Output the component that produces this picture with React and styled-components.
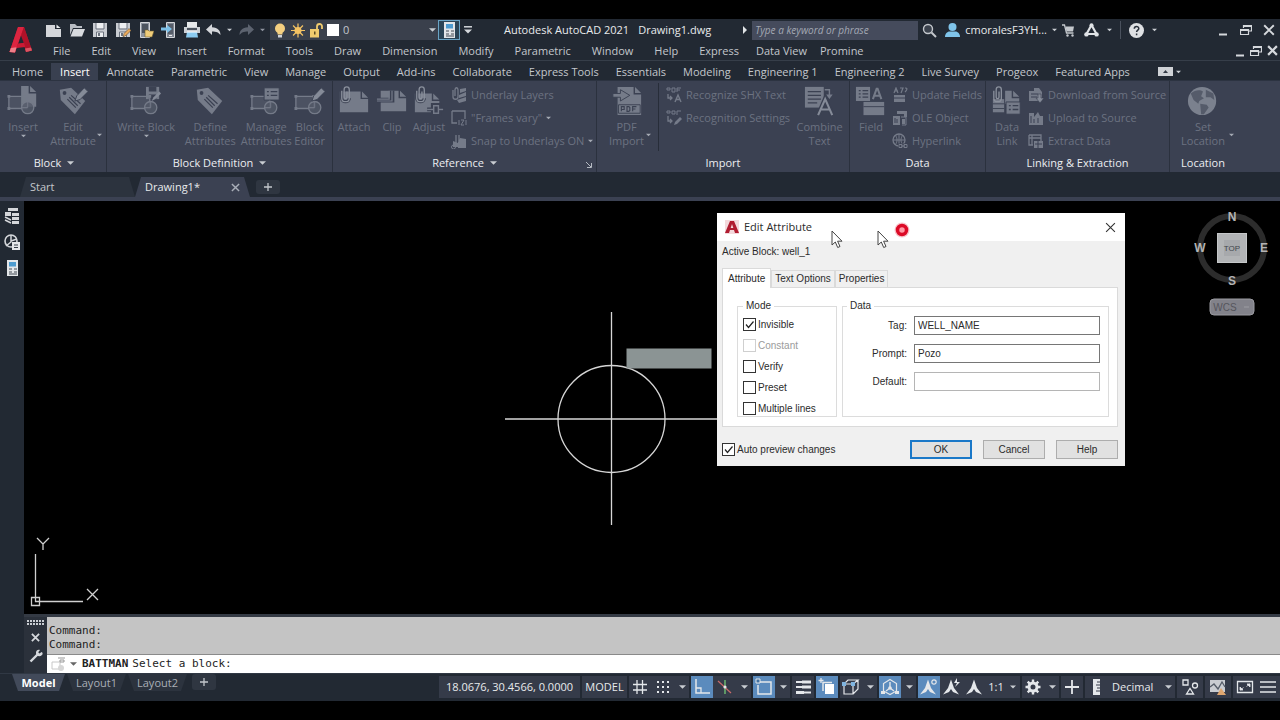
import React from 'react';
import styled, { createGlobalStyle, css } from 'styled-components';

const c = {
  chrome: '#222933',
  panel: '#3b4152',
  tab: '#2c333e',
  field: '#3a404c',
  text: '#c3c7cc',
  bright: '#e8eaec',
  dim: '#6c7281',
  dimIcon: '#757b89',
  blue: '#5b8bbd',
};

const Global = createGlobalStyle`
  *, *::before, *::after { box-sizing: border-box; }
  body { margin: 0; background: #000; font: 11px/14px "Open Sans", "Noto Sans", sans-serif; color: ${c.text}; }
  button, input, select { font: inherit; color: inherit; margin: 0; padding: 0; border: 0; background: none; border-radius: 0; }
  svg { display: block; flex: none; }
`;

/* ---------- page frame ---------- */

const Page = styled.div`
  height: 100vh;
  min-height: 600px;
  padding: 19px 0;
  background: #000;
  display: flex;
  flex-direction: column;
  overflow: hidden;
`;

const Header = styled.header`
  display: flex;
  background: ${c.chrome};
  border-bottom: 1px solid #363e49;
`;

const LogoButton = styled.button`
  width: 42px;
  display: grid;
  place-items: center;
`;

const HeaderRows = styled.div`
  flex: 1;
  min-width: 0;
`;

const TitleRow = styled.div`
  height: 22px;
  display: flex;
  align-items: center;
  white-space: nowrap;
`;

const MenuRow = styled.nav`
  height: 19px;
  padding-left: 0;
  display: flex;
  align-items: center;
  white-space: nowrap;
`;

const IconButton = styled.button`
  width: ${(p) => p.$w || 23}px;
  height: ${(p) => p.$h || 20}px;
  display: grid;
  place-items: center;
`;

const LayerBox = styled.div`
  width: 168px;
  height: 20px;
  margin-left: 1px;
  background: ${c.field};
  display: flex;
  align-items: center;
  gap: 4px;
  padding: 0 2px 0 3px;
`;

const Select = styled.select`
  appearance: none;
  flex: 1;
  min-width: 0;
  height: 18px;
  color: ${c.text};
`;

const Swatch = styled.span`
  width: 12px;
  height: 12px;
  background: #fff;
`;

const CalcButton = styled.button`
  width: 22px;
  height: 20px;
  border: 1px solid #6aa3c4;
  background: #2b4456;
  display: grid;
  place-items: center;
`;

const Title = styled.div`
  flex: 1;
  padding-left: 29px;
  color: ${c.bright};
  display: flex;
  gap: 9px;
`;

const SearchBox = styled.input`
  width: 166px;
  height: 19px;
  margin-left: 5px;
  padding: 0 3px;
  background: #454b5c;
  font-size: 10px;
  font-style: italic;
  &::placeholder { color: #a3a8b3; opacity: 1; }
`;

const UserButton = styled.button`
  margin-left: 4px;
  display: flex;
  align-items: center;
  gap: 5px;
  color: ${c.bright};
`;

const Separator = styled.span`
  width: 1px;
  height: 18px;
  background: #4a515d;
  margin: 0 4px;
`;

const WindowButtons = styled.div`
  display: flex;
  margin-left: ${(p) => p.$left || 'auto'};
`;

const MenuLink = styled.a`
  padding: 0 ${(p) => (p.$tight ? 6 : 10)}px 0 ${(p) => (p.$tight ? 7 : 11)}px;
  color: ${c.text};
  text-decoration: none;
`;

/* ---------- ribbon ---------- */

const RibbonTabs = styled.nav`
  height: 19px;
  padding: 2px 3px 0;
  background: ${c.chrome};
  display: flex;
  white-space: nowrap;
`;

const RibbonTab = styled.button`
  height: 17px;
  padding: 0 8px 0 9px;
  color: ${(p) => (p.$active ? '#fff' : c.text)};
  background: ${(p) => (p.$active ? '#394050' : 'none')};
`;

const RibbonToggle = styled.button`
  display: flex;
  align-items: center;
  gap: 3px;
  margin-left: 20px;
`;

const Ribbon = styled.section`
  height: 92px;
  padding-left: 2px;
  border-top: 1px solid #2c3341;
  background: ${c.panel};
  display: grid;
  grid-template-columns: 105px 226px 264px 253px 136px 184px minmax(66px, 1fr);
  white-space: nowrap;
`;

const Panel = styled.section`
  display: flex;
  flex-direction: column;
  border-right: ${(p) => (p.$last ? 0 : 1)}px solid #2b313e;
`;

const PanelTools = styled.div`
  flex: 1;
  display: flex;
  align-items: flex-start;
  padding-top: 2px;
  padding-left: ${(p) => p.$pad || 0}px;
`;

const PanelTitle = styled.button`
  height: 18px;
  color: #eceef1;
  display: flex;
  align-items: center;
  justify-content: center;
  gap: 6px;
  max-width: ${(p) => (p.$short ? '66px' : 'none')};
  position: relative;
`;

const Launcher = styled.span`
  position: absolute;
  right: 4px;
  bottom: 4px;
`;

const BigButton = styled.button`
  width: ${(p) => p.$w}px;
  padding-top: 2px;
  color: ${c.dim};
  display: flex;
  flex-direction: column;
  align-items: center;
  text-align: center;
  position: relative;
  & > svg:first-child { margin-bottom: 3px; }
`;

const SideCaret = styled.span`
  position: absolute;
  right: 0;
  bottom: 11px;
`;

const SmallStack = styled.div`
  display: flex;
  flex-direction: column;
  padding-left: ${(p) => p.$pad || 0}px;
`;

const SmallButton = styled.button`
  height: 23px;
  color: ${c.dim};
  display: flex;
  align-items: center;
  gap: 4px;
`;

const PanelRule = styled.span`
  width: 1px;
  height: 68px;
  background: #272d39;
`;

/* ---------- file tabs ---------- */

const FileTabs = styled.nav`
  height: 29px;
  padding: 5px 0 0 20px;
  background: ${c.chrome};
  border-bottom: 4px solid ${c.panel};
  display: flex;
`;

const FileTab = styled.div`
  width: 115px;
  height: 20px;
  padding: 0 10px;
  background: ${(p) => (p.$active ? c.panel : c.tab)};
  clip-path: polygon(0 100%, 6px 0, calc(100% - 6px) 0, 100% 100%);
  display: flex;
  align-items: center;
  justify-content: space-between;
  color: ${(p) => (p.$active ? c.bright : c.text)};
`;

const AddTab = styled.button`
  width: 24px;
  height: ${(p) => p.$h || 14}px;
  margin: ${(p) => p.$m || '3px 0 0 6px'};
  border-radius: 3px;
  background: #2f3641;
  display: grid;
  place-items: center;
`;

/* ---------- workspace ---------- */

const Workspace = styled.main`
  flex: 1;
  min-height: 0;
  display: flex;
`;

const Sidebar = styled.aside`
  width: 24px;
  padding-top: 2px;
  background: ${c.chrome};
  display: flex;
  flex-direction: column;
  align-items: center;
`;

const SideButton = styled.button`
  width: 24px;
  height: 26px;
  display: grid;
  place-items: center;
`;

const Stage = styled.div`
  flex: 1;
  min-width: 0;
  display: flex;
  flex-direction: column;
`;

const Canvas = styled.div`
  flex: 1;
  min-height: 0;
  position: relative;
  background: #000;
`;

const Drawing = styled.svg`
  position: absolute;
  inset: 0;
  width: 100%;
  height: 100%;
`;

const UcsIcon = styled.svg`
  position: absolute;
  left: 4px;
  bottom: 4px;
`;

const ViewCube = styled.svg`
  position: absolute;
  right: 10px;
  top: 8px;
`;

const Pointer = styled.svg`
  position: absolute;
  top: ${(p) => p.$y}px;
  right: ${(p) => p.$right}px;
`;

const CommandArea = styled.section`
  display: flex;
  border-top: 3px solid #343a44;
  background: #2b313b;
`;

const CommandTools = styled.div`
  width: 23px;
  padding-top: 3px;
  display: flex;
  flex-direction: column;
  align-items: center;
  gap: 7px;
`;

const CommandBody = styled.div`
  flex: 1;
  color: #222;
  font: 11px/14px "DejaVu Sans Mono", monospace;
`;

const CommandHistory = styled.div`
  height: 37px;
  padding: 7px 2px 0;
  background: #c4c4c4;
`;

const CommandLine = styled.label`
  height: 19px;
  padding-left: 4px;
  background: #fff;
  border-top: 1px solid #8a8a8a;
  display: flex;
  align-items: center;
  gap: 5px;
`;

const Prompt = styled.span`
  display: flex;
  gap: 4px;
`;

const CommandInput = styled.input`
  flex: 1;
  outline: 0;
`;

/* ---------- status bar ---------- */

const StatusRow = styled.footer`
  height: 28px;
  background: ${c.chrome};
  border-top: 1px solid #303844;
  display: flex;
  justify-content: space-between;
  white-space: nowrap;
`;

const LayoutTabs = styled.div`
  padding-left: 12px;
  display: flex;
  gap: 2px;
`;

const LayoutTab = styled.button`
  width: ${(p) => (p.$active ? 53 : 59)}px;
  height: 17px;
  clip-path: polygon(0 0, 100% 0, calc(100% - 6px) 100%, 6px 100%);
  background: ${(p) => (p.$active ? '#424a5a' : c.tab)};
  color: ${(p) => (p.$active ? '#fff' : '#a9aeb6')};
  font-weight: ${(p) => (p.$active ? 700 : 400)};
`;

const StatusBar = styled.div`
  display: flex;
  gap: 2px;
  padding-top: 2px;
`;

const StatusGroup = styled.div`
  height: 22px;
  padding: 0 ${(p) => p.$pad || 0}px;
  background: #353b49;
  display: flex;
  gap: 1px;
  color: ${c.bright};
`;

const StatusText = styled.button`
  width: ${(p) => p.$w}px;
`;

const StatusIcon = styled.button`
  width: 22px;
  display: grid;
  place-items: center;
  ${(p) => p.$on && css`background: ${c.blue};`}
`;

const StatusCaret = styled.button`
  width: 14px;
  display: grid;
  place-items: center;
`;

const UnitSelect = styled.select`
  appearance: none;
  width: 52px;
  padding-left: 4px;
`;

/* ---------- dialog ---------- */

const Dialog = styled.form`
  position: absolute;
  top: 12px;
  right: 155px;
  width: 408px;
  background: #f0f0f0;
  color: #2b2b2b;
  font: 10px/14px "Liberation Sans", Arial, sans-serif;
`;

const DialogBar = styled.div`
  height: 28px;
  padding: 0 9px 0 8px;
  background: #fff;
  display: flex;
  align-items: center;
  gap: 5px;
  font: 11px/14px "Open Sans", sans-serif;
`;

const DialogTitle = styled.h2`
  flex: 1;
  margin: 0;
  font: inherit;
`;

const DialogBody = styled.div`
  padding: 4px 7px 6px 5px;
`;

const TabStrip = styled.div`
  display: flex;
  align-items: flex-end;
  margin-top: 9px;
  height: 19px;
`;

const DialogTab = styled.button`
  height: ${(p) => (p.$active ? 20 : 17)}px;
  margin-bottom: ${(p) => (p.$active ? -1 : 0)}px;
  padding: 0 ${(p) => (p.$active ? 5 : 3)}px;
  background: ${(p) => (p.$active ? '#fff' : '#f0f0f0')};
  border: 1px solid #dadada;
  border-bottom: 0;
  position: relative;
`;

const TabPage = styled.div`
  height: 140px;
  padding: 11px 8px 9px 14px;
  background: #fff;
  border: 1px solid #dadada;
  display: flex;
  gap: 5px;
`;

const Group = styled.fieldset`
  flex: ${(p) => (p.$grow ? '1' : '0 0 100px')};
  min-width: 0;
  margin: 0;
  padding: ${(p) => (p.$grow ? '3px 8px 0 4px' : '1px 5px 0')};
  border: 1px solid #dcdcdc;
`;

const Legend = styled.legend`
  padding: 0 3px;
`;

const Check = styled.label`
  height: 21px;
  display: flex;
  align-items: center;
  gap: 2px;
  color: ${(p) => (p.$off ? '#9b9b9b' : 'inherit')};
`;

const CheckCell = styled.span`
  display: grid;
  & > * { grid-area: 1 / 1; }
  & > svg { pointer-events: none; }
`;

const CheckInput = styled.input`
  appearance: none;
  width: 13px;
  height: 13px;
  background: #fff;
  border: 1px solid #333;
  &:disabled { border-color: #cfcfcf; }
`;

const Field = styled.label`
  height: 28px;
  display: flex;
  align-items: flex-start;
  gap: 7px;
`;

const FieldName = styled.span`
  width: 60px;
  line-height: 19px;
  text-align: right;
`;

const TextInput = styled.input`
  flex: 1;
  min-width: 0;
  height: 19px;
  padding: 0 3px;
  background: #fff;
  border: 1px solid ${(p) => (p.$soft ? '#b5b5b5' : '#767676')};
`;

const DialogFoot = styled.div`
  display: flex;
  align-items: center;
  gap: 11px;
  padding-top: 12px;
  & > label { flex: 1; }
`;

const DialogButton = styled.button`
  width: 62px;
  height: 19px;
  background: #e1e1e1;
  border: ${(p) => (p.$main ? '2px solid #1a78c8' : '1px solid #adadad')};
`;

/* ---------- drawings ---------- */

const Svg = ({ w = 16, h = 16, box, children, ...rest }) => (
  <svg width={w} height={h} viewBox={box || `0 0 ${w} ${h}`} fill="none" aria-hidden="true" {...rest}>
    {children}
  </svg>
);

const Caret = ({ color = '#c9cdd2', w = 7 }) => (
  <Svg w={w} h={4} box="0 0 8 4"><path d="M0 0h8l-4 4z" fill={color} /></Svg>
);

const Cross = ({ s = 9, color = '#d5d8dc', t = 1.6 }) => (
  <Svg w={s} h={s} box="0 0 10 10"><path d="M1 1l8 8M9 1l-8 8" stroke={color} strokeWidth={t} /></Svg>
);

const Plus = ({ s = 8, t = 1.6 }) => (
  <Svg w={s} h={s} box="0 0 10 10"><path d="M5 0v10M0 5h10" stroke="#c3c7cc" strokeWidth={t} /></Svg>
);

const Restore = () => (
  <Svg w={12} h={12}><path d="M3.500 4V1.500h8v5.500H9M3.500 2.500h8M.5 5.500h8v5h-8zM.5 6.500h8" stroke="#d5d8dc" strokeWidth="1.200" /></Svg>
);

const Minimize = () => (
  <Svg w={12} h={12}><path d="M2 10.500h8" stroke="#d5d8dc" strokeWidth="2" /></Svg>
);

const Logo = () => (
  <Svg w={24} h={28} box="0 0 24 28">
    <path d="M9 1h6l8 23.500-6 1.500-1.500-5.500-8 1L6 26.500.500 26z" fill="#b8162d" />
    <path d="M9 1L.500 26l5.500.5L12.500 8 15 1z" fill="#dc2540" />
    <path d="M12.500 8L15 1l8 23.500-6 1.500z" fill="#b01229" />
    <path d="M12 9.500l2.800 7.500-5.600.8z" fill="#222933" />
    <path d="M8.500 17.800l6.500-1 1.200 4.200-8.700 1z" fill="#cb1b35" />
    <path d="M.500 26l1.300-4 5.700-.8-1.500 5.300z" fill="#ee7f89" />
    <path d="M17 26l-1-3.500 6-1 1 3z" fill="#dd5563" />
  </Svg>
);

const NewIcon = () => <Svg><path d="M0 3h9v4h6v8H0z" fill="#d4d6da" /><path d="M10.500 2.500l4 3.500h-4z" fill="#eceef0" /></Svg>;
const OpenIcon = () => <Svg><path d="M1 2h5l2 2h5v2H4L1 13z" fill="#b9bdc4" /><path d="M4.500 7H16l-3 7.500H1.500z" fill="#d9dbdf" /></Svg>;
const FloppyShape = () => (
  <>
    <path d="M1 1h14v14H1z" fill="#c9ccd1" />
    <path d="M4 1h8v5.500H4z" fill="#eef0f2" /><path d="M4 1v6h8V1" stroke="#6c737e" />
    <path d="M4.500 15v-5h7v5" fill="#eceef0" stroke="#6c737e" /><path d="M6 11h2v3H6z" fill="#6c737e" />
  </>
);
const SaveIcon = () => <Svg><FloppyShape /></Svg>;
const SaveAsIcon = () => <Svg><FloppyShape /><path d="M8 15l1-3.500 5-5 2 2-5 5z" fill="#e9a95b" stroke="#5a4a35" strokeWidth=".6" /></Svg>;
const PhoneOpenIcon = () => <Svg><path d="M2.500.5h9v15h-9z" fill="#8f959f" stroke="#d4d6da" /><path d="M4 2h6v9H4z" fill="#4d545f" /><path d="M7 8h3l1 1h5l-2 6H7z" fill="#f0cd7a" stroke="#6b5a30" strokeWidth=".6" /></Svg>;
const PhoneSaveIcon = () => <Svg><path d="M5.500.5h8v15h-8z" fill="#7d8490" stroke="#d4d6da" /><path d="M7 2h5v10H7z" fill="#565d69" /><path d="M0 5.500h6V3l5 4-5 4V8.500H0z" fill="#7cc0e8" /><path d="M8 13.500h3" stroke="#eee" /></Svg>;
const PrintIcon = () => <Svg><path d="M3 0h10v5H3z" fill="#e6e8ea" /><path d="M0 5h16v6H0z" fill="#cdd0d5" /><path d="M3 6h10v2H3z" fill="#4b525d" /><path d="M3 10h10l1 5.500H2z" fill="#8ccbf0" /><path d="M3 10h10" stroke="#fff" /></Svg>;
const UndoIcon = ({ color = '#d4d6da', flip }) => (
  <Svg w={15} h={12} box="0 0 15 12"><path d="M6 0v3.300C12 3.500 14.500 7 14.500 11 12.500 8.500 10.500 7.500 6 7.500V11L0 5.500z" fill={color} transform={flip ? 'translate(15 0) scale(-1 1)' : undefined} /></Svg>
);
const BulbIcon = () => <Svg w={14} h={15}><circle cx="7" cy="5.500" r="5" fill="#f5cf80" /><path d="M4.500 9h5v2.500h-5z" fill="#f5cf80" /><path d="M5 12h4v2.500H5z" fill="#d0d3d8" /></Svg>;
const SunIcon = () => <Svg w={14} h={15} box="0 0 15 15"><circle cx="7.500" cy="7.500" r="3.800" fill="#f3c263" /><path d="M7.500 0v15M0 7.500h15M2.200 2.200l10.600 10.600M12.800 2.200L2.200 12.800" stroke="#f3c263" strokeWidth="1.300" /></Svg>;
const LockIcon = () => <Svg w={14} h={15}><path d="M1 6h9v8.500H1z" fill="#f0cb6e" /><path d="M8 6V3.500a2.500 2.500 0 015 0V6" stroke="#f0cb6e" strokeWidth="1.800" /><path d="M5 8.500h1.500v3H5z" fill="#5a4a20" /></Svg>;
const CalcIcon = ({ w = 13, h = 16 }) => <Svg w={w} h={h} box="0 0 13 16"><path d="M1 0h11v16H1z" fill="#e3e6e9" /><path d="M3 2h7v4.500H3z" fill="#4d9bcf" /><path d="M3 9h3M8 9h3M3 12h3M8 12h3M3 14h8" stroke="#434a55" /></Svg>;
const LineCaret = () => <Svg w={8} h={8}><path d="M0 .8h8" stroke="#d5d8dc" strokeWidth="1.500" /><path d="M0 3.500h8l-4 4z" fill="#d5d8dc" /></Svg>;
const SearchIcon = () => <Svg w={15} h={15}><circle cx="6" cy="6" r="4.500" stroke="#c3c7cc" strokeWidth="1.400" fill="#3b424d" /><path d="M9.500 9.500l4.500 4.500" stroke="#c3c7cc" strokeWidth="2" /></Svg>;
const UserIcon = () => <Svg w={15} h={15}><circle cx="7.500" cy="4" r="4" fill="#7fc4ea" /><path d="M0 14c0-4 3-5.500 4.500-5.500h6c1.500 0 4.500 1.500 4.500 5.500z" fill="#7fc4ea" /></Svg>;
const CartIcon = () => <Svg w={13} h={13}><path d="M0 1h2.500l2 8h7" stroke="#c3c7cc" strokeWidth="1.300" /><path d="M3.500 2.500H12l-1 5H4.500z" fill="#c3c7cc" /><circle cx="5.500" cy="11.500" r="1.200" fill="#c3c7cc" /><circle cx="10.500" cy="11.500" r="1.200" fill="#c3c7cc" /></Svg>;
const AppsIcon = () => <Svg w={15} h={14}><path d="M7.500 2L2.500 11M7.500 2l5 9M2 11h11" stroke="#e0e3e6" strokeWidth="2.200" /><circle cx="7.500" cy="2.200" r="2" fill="#e0e3e6" /><circle cx="2.400" cy="11.400" r="2.200" fill="#e0e3e6" /><circle cx="12.600" cy="11.400" r="2.200" fill="#e0e3e6" /></Svg>;
const HelpIcon = () => <Svg w={15} h={15}><circle cx="7.500" cy="7.500" r="7.500" fill="#dfe1e4" /><path d="M5.300 5.800c0-3.200 4.500-3 4.500-.3 0 1.700-2.200 1.700-2.200 3.600M7.600 10.500v1.700" stroke="#2a313b" strokeWidth="1.500" /></Svg>;

const d = c.dimIcon;
const BlockShape = () => (
  <>
    <path d="M2 11h19v13H2z" stroke={d} fill={d} fillOpacity=".3" strokeWidth="1.400" />
    <circle cx="22" cy="23" r="6.500" stroke={d} strokeWidth="1.400" fill="#545a69" fillOpacity=".8" />
    <path d="M22 17v6h-6" stroke={d} /><path d="M.5 9.500h3v3h-3zM.5 22.500h3v3h-3zM19.500 9.500h3v3h-3z" fill={d} />
  </>
);
const PageShape = ({ x = 0, y = 0, w = 20, h = 24 }) => (
  <path d={`M${x} ${y}h${w - 8}v8h8v${h - 8}h-${w}zM${x + w - 6.500} ${y}l6.500 6.500h-6.500z`} fill={d} />
);
const Pencil = () => <path d="M19 16l2-5.500L29 2l4 4-8.500 8.500z" fill="#858b98" stroke={c.panel} />;
const TagShape = () => (
  <g transform="translate(2 0)"><path d="M1 4l12-2 15 14-11 14L2 15z" fill={d} /><circle cx="6" cy="7.500" r="2" fill={c.panel} /><path d="M9 14l9 9M13 10l10 9M11 12l9 9" stroke={c.panel} strokeWidth="1.300" /></g>
);
const Clipper = ({ x = 0 }) => <path d={`M${x} 5v8c0 5 8 5 8 0V4c0-4-5.500-4-5.500 0v8c0 2 3 2 3 0V6`} stroke="#8a909c" strokeWidth="1.400" />;

const bigArt = {
  insert: <><PageShape x={15} w={16} h={22} /><BlockShape /></>,
  editAttr: <><TagShape /><Pencil /></>,
  write: <><path d="M17 1h14v13H17z" fill={d} /><path d="M20 1h8v5h-8zM20 9h8v5h-8z" fill={c.panel} /><BlockShape /><path d="M23 16l2-4 6-6 2 2-6 6z" fill="#858b98" /></>,
  define: <TagShape />,
  manage: <><BlockShape /><path d="M15 2h16v13H15z" fill={d} stroke={c.panel} /><path d="M18 6h2M22 6h7M18 10h2M22 10h7" stroke={c.panel} strokeWidth="1.500" /></>,
  editor: <><BlockShape /><Pencil /></>,
  attach: <><PageShape x={2} y={6} w={30} h={22} /><path d="M4 5v8c0 5 8 5 8 0" stroke={c.panel} strokeWidth="3.500" /><Clipper x={4} /></>,
  clip: <><PageShape x={5} y={5} w={27} h={22} /><path d="M1 15h16V5" stroke={c.panel} strokeWidth="5" /><path d="M1 16h16V5M1 14h13V5" stroke={d} strokeWidth="1.300" /></>,
  adjust: <><PageShape x={2} y={8} w={26} h={20} /><path d="M4 5v8c0 5 8 5 8 0" stroke={c.panel} strokeWidth="3.500" /><Clipper x={4} /><path d="M15 25h17M21 20h7v10h-7z" stroke={c.panel} strokeWidth="4" /><path d="M15 25h17" stroke={d} strokeWidth="1.500" /><path d="M22 21h5v8h-5z" stroke={d} fill={c.panel} strokeWidth="1.500" /></>,
  pdf: <><PageShape x={7} y={1} w={25} h={30} /><path d="M8 20h23v9H8z" stroke={c.panel} /><path d="M11 27v-5h3v3h-3M17 22v5h2l1-1v-3l-1-1zM23 27v-5h4M23 24.500h3" stroke={c.panel} strokeWidth="1.200" /><path d="M2 8h8V4l10 6-10 6v-4H2z" fill={d} stroke={c.panel} /></>,
  combine: <><path d="M1 1h20v22H1z" fill={d} /><path d="M4 6h14M4 10h14M4 14h14M4 18h10" stroke={c.panel} strokeWidth="1.300" /><path d="M22 4h5v8" stroke={d} strokeWidth="1.500" /><path d="M23.500 9h7l-3.500 5z" fill={d} /><path d="M15 31l7.500-17L30 31M18 25h9" stroke={c.panel} strokeWidth="5" /><path d="M15 31l7.500-17L30 31M18 25h9" stroke="#858b98" strokeWidth="2.200" /></>,
  field: <><path d="M1 1h15v15H1z" fill={d} /><path d="M4 5h2M8 5h6M4 8.500h2M8 8.500h6M4 12h2M8 12h6" stroke={c.panel} strokeWidth="1.300" /><path d="M19 14l4-11h1l4 11M20.500 10.500h6" stroke={d} strokeWidth="2.200" /><path d="M9 17h22v14H9z" fill={d} /><path d="M9 22h22" stroke={c.panel} /></>,
  link: <><path d="M2 14h12v14H2z" fill={d} /><path d="M2 19h12M2 24h12" stroke={c.panel} /><PageShape x={15} y={5} w={15} h={14} /><Clipper x={3} /><path d="M16 17h15v13H16z" fill={d} stroke={c.panel} /><path d="M19 21h2M23 21h6M19 25h2M23 25h6" stroke={c.panel} strokeWidth="1.400" /></>,
  globe: <><circle cx="16" cy="16" r="15" fill="#7b818e" /><path d="M4 8c5-4 10-4 13-2l-2 5 3 2-5 3-1 3-5-4zM14 19l7 1 2 3-5 7h-3zM20 4l8 4 1 7-4-3-5 0z" fill="#555b6a" /></>,
};
const BigArt = ({ name }) => <Svg w={32} h={32} box="0 0 34 32">{bigArt[name]}</Svg>;

const smallArt = {
  layers: <><path d="M2 3v7c0 3 5 3 5 0V3c0-3-3-3-3 0v6" stroke={d} strokeWidth="1.300" /><path d="M9 2l6-1v3l-6 2zM8 8l7-3v4l-7 2zM6 13l9-3v4l-7 2z" fill={d} /></>,
  frames: <><path d="M1 1h13v8M1 1v12h5" stroke={d} strokeWidth="1.300" /><path d="M8 10v5M15 10v5M10 10h3l-3 5h3" stroke={d} /></>,
  snap: <><path d="M5 2v9M8 2v6" stroke={d} strokeWidth="1.300" /><path d="M9 5l6 1v9H7V9zM2 8v6h5v-4z" fill={d} /><circle cx="2.500" cy="14" r="2" stroke={d} /></>,
  shx: <><path d="M1 1h3v2H1zM6 1h3v4H6zM11 1h4M11 1v4M11 3h3" stroke={d} /><path d="M2 7v4h4M4 9l2 2-2 2" stroke={d} strokeWidth="1.300" /><path d="M9 15l3-7 3 7M10 12.500h4" stroke={d} strokeWidth="1.400" /></>,
  recog: <><path d="M1 1h3v2H1zM6 1h3v3H6zM11 1h4M11 1v4" stroke={d} /><path d="M2 6v5h4M4 9l2 2-2 2" stroke={d} strokeWidth="1.300" /><path d="M8 15l1-3 5-5 2 2-5 5z" fill={d} /></>,
  fields: <><path d="M2 6l2-5 2 5M3 4h3M8 1h3l-2 5M13 1c3 0 2 2 0 4" stroke={d} strokeWidth="1.200" /><path d="M2 8h11v7H2z" fill={d} /><path d="M2 11h11" stroke={c.panel} /></>,
  ole: <><path d="M1 6h7v9H1zM5 1h10v3H5zM12 4h3v3h-3zM10 9h3v5h-3z" fill={d} /><path d="M3 8v5M5 9v4" stroke={c.panel} /><path d="M9 7h5v8h-4" stroke={d} /></>,
  hyper: <><circle cx="7" cy="7" r="6" stroke={d} strokeWidth="1.300" /><path d="M7 1v12M1 7h12M3.500 2.500c2 3 2 6 0 9M10.500 2.500c-2 3-2 6 0 9" stroke={d} /><path d="M6 13h10" stroke={c.panel} strokeWidth="5" /><path d="M7 11.500h3v3H7zM12 11.500h3v3h-3zM9 13h4" stroke={d} /></>,
  down: <><path d="M1 4h5V1h5l3 4v9H1z" fill={d} /><path d="M3 7h7M3 10h6" stroke={c.panel} /><path d="M10 7h3v4h3l-4 5-4-5h2z" fill="#858b98" stroke={c.panel} strokeWidth=".6" /></>,
  up: <><path d="M1 3h5v4l4-5 2 4h3v9H1z" fill={d} /><path d="M3 6v7M6 9v4M10 8v5" stroke={c.panel} /></>,
  extract: <><path d="M1 2h12v8M1 2v10h4M1 5h12M4 2v10" stroke={d} strokeWidth="1.300" /><path d="M6 8h9v7H6z" fill={d} /><path d="M7 11h7M10 8v7" stroke={c.panel} /></>,
};
const SmallArt = ({ name }) => <Svg>{smallArt[name]}</Svg>;

const w = '#e4e7ea';
const annoFigure = 'M8 1.500L11 10l5 6.500-6-2.500-2-3-2 3-6 2.500L5 10z';
const statusArt = {
  grid: <path d="M6 2v14M11.500 2v14M2 6.500h14M2 12h14" stroke={w} strokeWidth="1.300" />,
  dots: <path d="M3 4h2M8 4h2M13 4h2M3 9h2M8 9h2M13 9h2M3 14h2M8 14h2M13 14h2" stroke={w} strokeWidth="2" />,
  ortho: <><path d="M3 1v14h14" stroke={w} strokeWidth="1.500" /><path d="M3 10h5v5" stroke={w} strokeWidth="1.300" /></>,
  polar: <><path d="M9 2v14" stroke="#6fbf73" strokeWidth="1.400" /><path d="M2 3l13 12" stroke="#c96a6a" strokeWidth="1.200" /><circle cx="9" cy="9" r="1.600" fill={w} /></>,
  osnap: <><path d="M5 4h11v12H3V7" stroke={w} strokeWidth="1.500" /><path d="M1 1h4v4H1z" stroke={w} fill="#3f6f9f" /></>,
  weight: <><path d="M2 4h6M2 9h8" stroke={w} strokeWidth="2" /><path d="M8 4h9M8 9h9" stroke={w} strokeWidth="3" /><path d="M2 14.500h8" stroke={w} strokeWidth="3" /><path d="M10 14.500h7" stroke={w} strokeWidth="2" /></>,
  cycle: <><path d="M7 6h9v10H7z" fill="#fff" /><path d="M5 13V4.500h9" stroke={w} strokeWidth="1.500" /><path d="M3 0v5M.5 2.500h5" stroke={w} strokeWidth="1.300" /></>,
  cube: <><path d="M2 6h9v10H2zM2 6l4-4h10l-5 4M16 2v9l-5 5" stroke={w} strokeWidth="1.200" /><path d="M0 4h4v4H0zM9 4h4v4H9z" fill="#7fb4df" /></>,
  ucs: <><path d="M9 1.500l6.500 4v7.500L9 16.500 2.500 13V5.500z" stroke={w} strokeWidth="1.200" /><path d="M9 4v6l-4 3M9 10l4 3" stroke={w} strokeWidth="1.400" /><circle cx="9" cy="10" r="1.800" fill={w} /><path d="M0 13h4v3H0zM14 13h4v3h-4z" fill={w} /></>,
  annoA: <><path d={annoFigure} fill={w} /><circle cx="14" cy="4" r="2.200" stroke={w} strokeWidth="1.200" /></>,
  annoB: <><path d={annoFigure} fill={w} /><path d="M14 0l-3 5h3l-2 4 5-5h-3z" fill={w} /></>,
  annoC: <path d={annoFigure} fill={w} />,
  gear: <><circle cx="9" cy="9" r="4" stroke={w} strokeWidth="3" /><path d="M9 1.500v3M9 13.500v3M1.500 9h3M13.500 9h3M3.700 3.700l2 2M12.300 12.300l2 2M14.300 3.700l-2 2M5.700 12.300l-2 2" stroke={w} strokeWidth="2.400" /></>,
  plus: <path d="M9 2v14M2 9h14" stroke={w} strokeWidth="1.800" />,
  ruler: <><path d="M6 1h7v16H6z" fill={w} /><path d="M10 4h3M9 7h4M10 10h3M9 13h4" stroke="#353b49" strokeWidth="1.200" /></>,
  shapes: <><path d="M2 2h5v5H2zM5.500 16l3.500-5.500 3.500 5.500z" stroke={w} strokeWidth="1.300" /><circle cx="14" cy="7.500" r="2.500" stroke={w} strokeWidth="1.300" /></>,
  image: <><path d="M1 2h15v12H1z" fill="#c9ccd1" /><path d="M1 9l4-3 4 5 4-7 3 5" stroke="#555c68" strokeWidth="1.300" /><path d="M8 17l4-7 5 7z" fill="#dfa66f" /></>,
  full: <><path d="M1.500 3.500h15v11h-15z" stroke={w} strokeWidth="1.300" /><path d="M10.500 8.500l3-2.500M11 6h3v3zM7.500 9.500l-3 2.500M7 12H4V9z" stroke={w} fill={w} strokeWidth=".8" /></>,
  menu: <path d="M1 4h16M1 9h16M1 14h16" stroke={w} strokeWidth="1.500" />,
};

/* ---------- data ---------- */

const menus = ['File', 'Edit', 'View', 'Insert', 'Format', 'Tools', 'Draw', 'Dimension', 'Modify', 'Parametric', 'Window', 'Help', 'Express', 'Data View', 'Promine'];
const ribbonTabs = ['Home', 'Insert', 'Annotate', 'Parametric', 'View', 'Manage', 'Output', 'Add-ins', 'Collaborate', 'Express Tools', 'Essentials', 'Modeling', 'Engineering 1', 'Engineering 2', 'Live Survey', 'Progeox', 'Featured Apps'];
const quickTools = [
  ['New', NewIcon], ['Open', OpenIcon], ['Save', SaveIcon], ['Save as', SaveAsIcon],
  ['Open from mobile', PhoneOpenIcon], ['Save to mobile', PhoneSaveIcon], ['Plot', PrintIcon],
];
const statusGroups = [
  { items: ['grid', 'dots', 'v'] },
  { items: ['*ortho', 'polar', 'v'] },
  { items: ['*osnap', 'v'] },
  { items: ['weight'] },
  { items: ['*cycle'] },
  { items: ['cube', 'v'] },
  { items: ['*ucs', 'v'] },
  { items: ['*annoA', 'annoB', 'annoC', 'scale'] },
  { items: ['gear', 'v'] },
  { items: ['plus'] },
  { items: ['ruler', 'units', 'v'] },
  { items: ['shapes'], pad: 2 },
  { items: ['image'], pad: 2 },
  { items: ['full', 'menu'], pad: 1 },
];

/* ---------- parts ---------- */

function Big({ art, lines, width, caret, side }) {
  return (
    <BigButton type="button" $w={width}>
      <BigArt name={art} />
      {lines.map((line) => <span key={line}>{line}</span>)}
      {caret && <Caret w={5} color="#a5aab4" />}
      {side && <SideCaret><Caret w={5} color="#a5aab4" /></SideCaret>}
    </BigButton>
  );
}

function Small({ art, label, caret }) {
  return (
    <SmallButton type="button">
      <SmallArt name={art} />{label}
      {caret && <Caret w={5} color="#a5aab4" />}
    </SmallButton>
  );
}

function CheckBox({ label, ...rest }) {
  return (
    <Check $off={rest.disabled}>
      <CheckCell>
        <CheckInput type="checkbox" {...rest} />
        {rest.defaultChecked && <Svg w={13} h={13}><path d="M3 6.500l2.500 3L10.500 3.500" stroke="#222" strokeWidth="1.200" /></Svg>}
      </CheckCell>
      {label}
    </Check>
  );
}

function StatusItem({ name }) {
  if (name === 'v') return <StatusCaret aria-label="Options"><Caret /></StatusCaret>;
  if (name === 'scale') return <><StatusText $w={18}>1:1</StatusText><StatusCaret aria-label="Scale"><Caret w={6} /></StatusCaret></>;
  if (name === 'units') return <UnitSelect aria-label="Units"><option>Decimal</option></UnitSelect>;
  const on = name[0] === '*';
  const key = on ? name.slice(1) : name;
  return <StatusIcon $on={on} aria-label={key}><Svg w={18} h={18}>{statusArt[key]}</Svg></StatusIcon>;
}

function EditAttributeDialog() {
  return (
    <Dialog onSubmit={(e) => e.preventDefault()}>
      <DialogBar>
        <Svg w={14} h={14}><path d="M0 0h14v14H0z" fill="#f3d9dc" /><path d="M5 1h4l5 12h-4l-1-3H5l-1 3H0z" fill="#b01c30" /><path d="M7 4l1.300 4H5.700z" fill="#f3d9dc" /></Svg>
        <DialogTitle>Edit Attribute</DialogTitle>
        <button type="button" aria-label="Close"><Cross s={11} color="#333" t={1} /></button>
      </DialogBar>
      <DialogBody>
        <div>Active Block: well_1</div>
        <TabStrip>
          <DialogTab type="button" $active>Attribute</DialogTab>
          <DialogTab type="button">Text Options</DialogTab>
          <DialogTab type="button">Properties</DialogTab>
        </TabStrip>
        <TabPage>
          <Group>
            <Legend>Mode</Legend>
            <CheckBox label="Invisible" defaultChecked />
            <CheckBox label="Constant" disabled />
            <CheckBox label="Verify" />
            <CheckBox label="Preset" />
            <CheckBox label="Multiple lines" />
          </Group>
          <Group $grow>
            <Legend>Data</Legend>
            <Field><FieldName>Tag:</FieldName><TextInput defaultValue="WELL_NAME" /></Field>
            <Field><FieldName>Prompt:</FieldName><TextInput defaultValue="Pozo" /></Field>
            <Field><FieldName>Default:</FieldName><TextInput $soft defaultValue="" /></Field>
          </Group>
        </TabPage>
        <DialogFoot>
          <CheckBox label="Auto preview changes" defaultChecked />
          <DialogButton type="submit" $main>OK</DialogButton>
          <DialogButton type="button">Cancel</DialogButton>
          <DialogButton type="button">Help</DialogButton>
        </DialogFoot>
      </DialogBody>
    </Dialog>
  );
}

const Arrow = ({ y, right }) => (
  <Pointer $y={y} $right={right} width="12" height="19" viewBox="0 0 12 19" aria-hidden="true">
    <path d="M1 1v14l3.300-3 2.400 5.500 2.300-1-2.400-5.300H11z" fill="#fff" stroke="#444" />
  </Pointer>
);

export default function App() {
  return (
    <Page>
      <Global />
      <Header>
        <LogoButton aria-label="Application menu"><Logo /></LogoButton>
        <HeaderRows>
          <TitleRow>
            {quickTools.map(([label, Icon]) => <IconButton key={label} aria-label={label}><Icon /></IconButton>)}
            <IconButton $w={20} aria-label="Undo"><UndoIcon /></IconButton>
            <IconButton $w={13} aria-label="Undo list"><Caret w={5} /></IconButton>
            <IconButton $w={20} aria-label="Redo"><UndoIcon flip color="#5c636f" /></IconButton>
            <IconButton $w={13} aria-label="Redo list"><Caret w={5} color="#8f95a0" /></IconButton>
            <LayerBox>
              <BulbIcon /><SunIcon /><LockIcon /><Swatch />
              <Select aria-label="Layer"><option>0</option></Select>
              <Caret />
            </LayerBox>
            <CalcButton aria-label="Properties"><CalcIcon /></CalcButton>
            <IconButton $w={15} aria-label="Customize"><LineCaret /></IconButton>
            <Title><span>Autodesk AutoCAD 2021</span><span>Drawing1.dwg</span></Title>
            <Svg w={4} h={8}><path d="M0 0v8l4-4z" fill="#e0e3e6" /></Svg>
            <SearchBox type="search" aria-label="Search" placeholder="Type a keyword or phrase" />
            <IconButton aria-label="Search"><SearchIcon /></IconButton>
            <UserButton><UserIcon />cmoralesF3YH...<Caret w={5} /></UserButton>
            <IconButton aria-label="App store"><CartIcon /></IconButton>
            <IconButton aria-label="Autodesk apps"><AppsIcon /></IconButton>
            <IconButton $w={13} aria-label="Apps list"><Caret w={5} /></IconButton>
            <Separator />
            <IconButton aria-label="Help"><HelpIcon /></IconButton>
            <IconButton $w={13} aria-label="Help list"><Caret w={5} /></IconButton>
            <WindowButtons $left="50px">
              <IconButton aria-label="Minimize"><Minimize /></IconButton>
              <IconButton aria-label="Restore"><Restore /></IconButton>
              <IconButton aria-label="Close"><Cross s={12} /></IconButton>
            </WindowButtons>
          </TitleRow>
          <MenuRow>
            {menus.map((m) => <MenuLink key={m} href="#menu" $tight={m === 'Data View' || m === 'Promine'}>{m}</MenuLink>)}
            <WindowButtons>
              <IconButton $w={16} $h={18} aria-label="Minimize drawing"><Minimize /></IconButton>
              <IconButton $w={16} $h={18} aria-label="Restore drawing"><Restore /></IconButton>
              <IconButton $w={16} $h={18} aria-label="Close drawing"><Cross s={11} t={2} /></IconButton>
            </WindowButtons>
          </MenuRow>
        </HeaderRows>
      </Header>

      <RibbonTabs>
        {ribbonTabs.map((t) => <RibbonTab key={t} $active={t === 'Insert'}>{t}</RibbonTab>)}
        <RibbonToggle aria-label="Collapse ribbon">
          <Svg w={15} h={9}><path d="M0 0h15v9H0z" fill="#cfd2d6" /><path d="M5 6l2.500-3L10 6z" fill="#333a45" /></Svg>
          <Caret w={5} />
        </RibbonToggle>
      </RibbonTabs>

      <Ribbon>
        <Panel>
          <PanelTools>
            <Big art="insert" lines={['Insert']} width={42} caret />
            <Big art="editAttr" lines={['Edit', 'Attribute']} width={58} side />
          </PanelTools>
          <PanelTitle>Block <Caret /></PanelTitle>
        </Panel>
        <Panel>
          <PanelTools $pad={10}>
            <Big art="write" lines={['Write Block']} width={60} caret />
            <Big art="define" lines={['Define', 'Attributes']} width={72} />
            <Big art="manage" lines={['Manage', 'Attributes']} width={42} />
            <Big art="editor" lines={['Block', 'Editor']} width={46} />
          </PanelTools>
          <PanelTitle>Block Definition <Caret /></PanelTitle>
        </Panel>
        <Panel>
          <PanelTools $pad={2}>
            <Big art="attach" lines={['Attach']} width={38} />
            <Big art="clip" lines={['Clip']} width={38} />
            <Big art="adjust" lines={['Adjust']} width={36} />
            <SmallStack $pad={4}>
              <Small art="layers" label="Underlay Layers" />
              <Small art="frames" label={'"Frames vary"'} caret />
              <Small art="snap" label="Snap to Underlays ON" caret />
            </SmallStack>
          </PanelTools>
          <PanelTitle>
            Reference <Caret />
            <Launcher><Svg w={6} h={6}><path d="M0 0l5 5M5.500 1v4.500H1" stroke="#b5bac2" /></Svg></Launcher>
          </PanelTitle>
        </Panel>
        <Panel>
          <PanelTools $pad={5}>
            <Big art="pdf" lines={['PDF', 'Import']} width={50} side />
            <SmallStack $pad={7}><PanelRule /></SmallStack>
            <SmallStack $pad={7}>
              <Small art="shx" label="Recognize SHX Text" />
              <Small art="recog" label="Recognition Settings" />
            </SmallStack>
            <Big art="combine" lines={['Combine', 'Text']} width={60} />
          </PanelTools>
          <PanelTitle>Import</PanelTitle>
        </Panel>
        <Panel>
          <PanelTools>
            <Big art="field" lines={['Field']} width={42} />
            <SmallStack>
              <Small art="fields" label="Update Fields" />
              <Small art="ole" label="OLE Object" />
              <Small art="hyper" label="Hyperlink" />
            </SmallStack>
          </PanelTools>
          <PanelTitle>Data</PanelTitle>
        </Panel>
        <Panel>
          <PanelTools>
            <Big art="link" lines={['Data', 'Link']} width={42} />
            <SmallStack>
              <Small art="down" label="Download from Source" />
              <Small art="up" label="Upload to Source" />
              <Small art="extract" label="Extract  Data" />
            </SmallStack>
          </PanelTools>
          <PanelTitle>Linking &amp; Extraction</PanelTitle>
        </Panel>
        <Panel $last>
          <PanelTools $pad={2}>
            <Big art="globe" lines={['Set', 'Location']} width={62} side />
          </PanelTools>
          <PanelTitle $short>Location</PanelTitle>
        </Panel>
      </Ribbon>

      <FileTabs>
        <FileTab>Start</FileTab>
        <FileTab $active>Drawing1*<Cross s={9} color="#a9aeb8" /></FileTab>
        <AddTab aria-label="New drawing"><Plus /></AddTab>
      </FileTabs>

      <Workspace>
        <Sidebar>
          <SideButton aria-label="Layer properties"><Svg><path d="M4 0h10v3H4zM1 4h6v4H1zM8 5h7v3H8zM8 9h7v3H8zM8 13h7v3H8z" fill="#d4d6da" /><path d="M1 9l6 3M1 12l6 3" stroke="#d4d6da" strokeWidth="1.500" /></Svg></SideButton>
          <SideButton aria-label="Materials"><Svg><circle cx="7" cy="7" r="6" stroke="#d4d6da" strokeWidth="1.600" /><path d="M7 1v7L2 12M7 7l6-2" stroke="#d4d6da" strokeWidth="1.500" /><path d="M8 8h8v8H8z" fill="#e4e6e9" /><path d="M10 11h4M10 13.500h4" stroke="#333a45" /></Svg></SideButton>
          <SideButton aria-label="Quick calculator"><CalcIcon /></SideButton>
        </Sidebar>
        <Stage>
          <Canvas>
            <Drawing aria-hidden="true">
              <g stroke="#d6d6d6" strokeWidth="1.300" fill="none">
                <circle cx="587.500" cy="218" r="53.500" />
                <path d="M587.500 111v213M481 218h213" />
              </g>
              <rect x="602.500" y="147.500" width="85" height="20" fill="#8b9494" />
            </Drawing>
            <UcsIcon width="78" height="74" viewBox="0 0 78 74" fill="none" stroke="#d0d0d0" strokeWidth="1.300" aria-hidden="true">
              <path d="M7.500 18v47.500H55M3.500 61.500h8v8h-8zM9 2l6 6v6M21 2l-6 6M59 53l11 11M70 53L59 64" />
            </UcsIcon>
            <ViewCube width="76" height="110" viewBox="0 0 76 110" fontFamily="Liberation Sans, Arial, sans-serif" textAnchor="middle">
              <circle cx="38" cy="39" r="32" fill="none" stroke="#2c2c2c" strokeWidth="6" />
              <g fill="#b4b4b4" fontSize="12" fontWeight="700">
                <text x="38" y="12">N</text><text x="38" y="76">S</text>
                <text x="6" y="43">W</text><text x="70" y="43">E</text>
              </g>
              <rect x="23.500" y="24.500" width="29" height="29" fill="#b2b4b6" stroke="#c5c7c9" />
              <rect x="30" y="31" width="16" height="16" fill="#a7a9ac" />
              <text x="38" y="42" fontSize="8" fill="#41464c">TOP</text>
              <rect x="16" y="90" width="44" height="16" rx="4" fill="#82828a" stroke="#9a9aa0" />
              <text x="31" y="102" fontSize="10" fill="#55555c">WCS</text>
              <path d="M50 98h5" stroke="#9c9ca2" />
            </ViewCube>
            <EditAttributeDialog />
            <Arrow y={29} right={437} />
            <Arrow y={29} right={391} />
            <Pointer $y={21} $right={370} width="16" height="16" viewBox="0 0 16 16" aria-hidden="true">
              <circle cx="8" cy="8" r="7.500" fill="#e0102c" opacity=".25" />
              <circle cx="8" cy="8" r="4.500" fill="#ff9aa6" stroke="#dc0a26" strokeWidth="3.500" />
            </Pointer>
          </Canvas>
          <CommandArea>
            <CommandTools>
              <Svg w={17} h={6}><path d="M0 1h17M0 4h17" stroke="#c9cdd2" strokeWidth="2" strokeDasharray="2 1" /></Svg>
              <button aria-label="Close command line"><Cross s={9} t={2} /></button>
              <button aria-label="Command settings"><Svg w={14} h={14}><path d="M1.500 12.500l7-7" stroke="#d5d8dc" strokeWidth="2.400" /><path d="M12.500 3l-2 1.500-1.300-1.300L11 1C9 0 6.500 1.500 7 4.500S11 8 13 6c1-1 .8-2.500-.5-3z" fill="#d5d8dc" /></Svg></button>
            </CommandTools>
            <CommandBody>
              <CommandHistory>
                <div>Command:</div>
                <div>Command:</div>
              </CommandHistory>
              <CommandLine>
                <Svg w={14} h={14}><path d="M1 5h8v7H1z" stroke="#c8c8c8" /><circle cx="10" cy="11" r="3" fill="#d6d6d6" /><path d="M7 1h7M9 3h4v2H9z" stroke="#999" /></Svg>
                <Caret color="#666" />
                <Prompt><strong>BATTMAN</strong><span>Select a block:</span></Prompt>
                <CommandInput type="text" />
              </CommandLine>
            </CommandBody>
          </CommandArea>
        </Stage>
      </Workspace>

      <StatusRow>
        <LayoutTabs>
          <LayoutTab $active>Model</LayoutTab>
          <LayoutTab>Layout1</LayoutTab>
          <LayoutTab>Layout2</LayoutTab>
          <AddTab $h={16} $m="0 0 0 3px" aria-label="New layout"><Plus /></AddTab>
        </LayoutTabs>
        <StatusBar>
          <StatusGroup><StatusText $w={141}>18.0676, 30.4566, 0.0000</StatusText></StatusGroup>
          <StatusGroup><StatusText $w={45}>MODEL</StatusText></StatusGroup>
          {statusGroups.map(({ items, pad }) => (
            <StatusGroup key={items.join()} $pad={pad}>
              {items.map((n) => <StatusItem key={n} name={n} />)}
            </StatusGroup>
          ))}
        </StatusBar>
      </StatusRow>
    </Page>
  );
}
